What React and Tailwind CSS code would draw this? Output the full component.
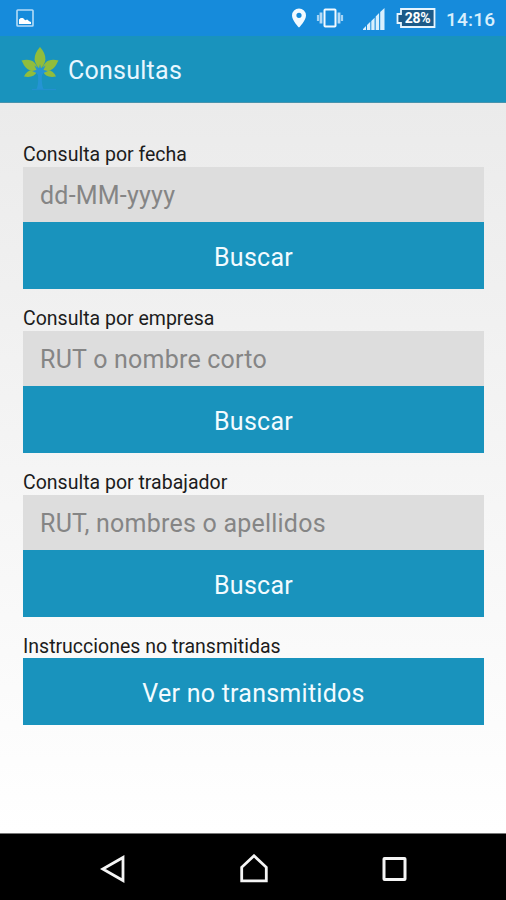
const SECTIONS = [
  { label: 'Consulta por fecha', placeholder: 'dd-MM-yyyy' },
  { label: 'Consulta por empresa', placeholder: 'RUT o nombre corto' },
  { label: 'Consulta por trabajador', placeholder: 'RUT, nombres o apellidos' },
]

function StatusBar() {
  return (
    <div className="h-9 shrink-0 bg-[#168bdb] flex items-center text-[#d9effd]">
      <svg className="ml-4 shrink-0" width="18" height="18" viewBox="0 0 18 18">
        <rect x="1" y="1" width="16" height="16" rx="0.8" fill="none" stroke="#b5dcf7" strokeWidth="1.6" />
        <path d="M3 15v-4.500l1.700-1.600L7 9l2.200 2.300 2-.9 2 1.800 1.800.8v2z" fill="#fff" />
      </svg>

      <svg className="ml-[257px] shrink-0" width="16" height="20" viewBox="0 0 16 20">
        <path
          fillRule="evenodd"
          d="M8 .4a7 7 0 0 0-7 7C1 12.300 8 19.500 8 19.500s7-7.200 7-12.100a7 7 0 0 0-7-7zm0 4.300a2.600 2.600 0 1 1 0 5.200 2.600 2.600 0 0 1 0-5.200z"
          fill="#f2faff"
        />
      </svg>

      <svg className="ml-[9px] shrink-0" width="28" height="20" viewBox="0 0 28 20">
        <rect x="8.500" y="1.500" width="11" height="17" rx="0.800" fill="none" stroke="#f2faff" strokeWidth="2" />
        <path d="M5 4.500v11M23 4.500v11" stroke="#b5dbf7" strokeWidth="2.800" />
        <path d="M2 7v6M26 7v6" stroke="#a5d3f4" strokeWidth="2.200" />
      </svg>

      <svg className="ml-[19px] mt-[2px] shrink-0" width="22" height="22" viewBox="0 0 22 22">
        <path d="M0 22v-1l3-3v4zM4 22v-5l3.300-3.300V22zM8.300 22v-9l3.300-3.300V22zM12.700 22V8.500l3.400-3.500v17zM17.200 22V4L21.500 0v22z" fill="#d9effd" />
      </svg>

      <div className="relative ml-[11px] w-10 h-5 shrink-0">
        <svg width="40" height="20" viewBox="0 0 40 20">
          <path d="M5 1h33.500v18H5v-4H1.500V6H5z" fill="#1c5a88" stroke="#e6f5ff" strokeWidth="1.800" />
        </svg>
        <span className="absolute inset-0 pl-[3px] flex items-center justify-center text-[14px] leading-none font-bold tracking-[-0.3px] text-white">
          28%
        </span>
      </div>

      <span className="ml-[10px] mt-[2px] text-[19px] leading-none font-medium tracking-[0.2px] whitespace-nowrap">14:16</span>
    </div>
  )
}

function TreeLogo() {
  return (
    <svg className="ml-[21px] mb-1 shrink-0" width="38" height="48" viewBox="0 0 38 48">
      <g fill="#91bd3c">
        <path d="M19 4c3.500 4 5.600 8 5.400 12.500-.2 3-2 6-4.400 9h-2c-2.400-3-4.200-6-4.400-9C13.400 12 15.500 8 19 4z" />
        <path d="M.5 17.500c5-1.300 10-1 13 2.200 2.400 2.500 3.300 5.500 3.500 8-5 .5-9.500-.3-12-3C2.800 22.500 2 20 .5 17.500z" />
        <path d="M37.500 17.500c-5-1.300-10-1-13 2.200-2.400 2.500-3.300 5.500-3.500 8 5 .5 9.500-.3 12-3 2.200-2.200 3-4.700 4.500-7.200z" />
        <path d="M3 33.500c1.500-4 4.500-6.300 8.500-6.600 1.800 0 3.300.6 4.500 1.600-1.700 4.300-6 6.300-13 5z" />
        <path d="M35 33.500c-1.500-4-4.500-6.300-8.500-6.600-1.800 0-3.300.6-4.500 1.600 1.700 4.300 6 6.300 13 5z" />
      </g>
      <path
        d="M19 21l1 4.500 4.500-3-2 4.500 4.500 1-4.500 2c-1.500 1.500-1.700 3-1.700 5 0 4.500.3 8 1.700 11h-7c1.400-3 1.700-6.500 1.700-11 0-2-.2-3.500-1.700-5L11 28l4.500-1-2-4.500 4.500 3z"
        fill="#2494d4"
      />
      <path d="M11 46.500h24" stroke="#2390d0" strokeWidth="1.200" />
    </svg>
  )
}

function ActionButton({ children }) {
  return (
    <button className="block w-full h-[67px] bg-[#1993bd] pt-[3px] text-center text-[25px] leading-none tracking-[0.25px] text-[#f2fbff]">
      {children}
    </button>
  )
}

function SearchSection({ label, placeholder }) {
  return (
    <section className="mb-[18px]">
      <label className="block">
        <span className="block h-6 text-[19.5px] leading-[23px] text-[#1c1c1c]">{label}</span>
        <input
          type="text"
          placeholder={placeholder}
          className="block w-full h-[55px] bg-[#dddddd] pl-[17px] pt-[2px] text-[25px] tracking-[0.22px] text-[#333] placeholder:text-[#858585] outline-none"
        />
      </label>
      <ActionButton>Buscar</ActionButton>
    </section>
  )
}

function NavBar() {
  return (
    <nav className="h-[67px] shrink-0 bg-black border-t border-[#777] flex items-center justify-between pl-[100px] pr-[98px] pt-1">
      <svg width="26" height="30" viewBox="0 0 26 30" fill="none" stroke="#f5f5f5" strokeWidth="2.800">
        <path d="M23 3.500v23L2.800 15z" />
      </svg>
      <svg width="30" height="30" viewBox="0 0 30 30" fill="none" stroke="#f5f5f5" strokeWidth="2.800">
        <path d="M15 1.800l12.300 11.500v13.500H2.700V13.300z" />
      </svg>
      <svg width="26" height="26" viewBox="0 0 26 26" fill="none" stroke="#f5f5f5" strokeWidth="3">
        <rect x="2" y="2.500" width="21" height="21" rx="0.500" />
      </svg>
    </nav>
  )
}

export default function App() {
  return (
    <div className="w-[506px] h-[900px] flex flex-col overflow-hidden font-['Roboto',sans-serif]">
      <StatusBar />

      <header className="h-[67px] shrink-0 bg-[#1993bd] border-b border-[#4793ad] flex items-center">
        <TreeLogo />
        <h1 className="ml-[9px] mt-[2px] text-[25px] leading-none tracking-[0.25px] text-[#e8f7ff]">Consultas</h1>
      </header>

      <main className="flex-1 bg-linear-to-b from-[#ebebeb] to-white pl-[23px] pr-[22px] pt-10">
        {SECTIONS.map((s) => (
          <SearchSection key={s.label} label={s.label} placeholder={s.placeholder} />
        ))}
        <section>
          <p className="h-[23px] text-[19.5px] leading-[23px] text-[#1c1c1c]">Instrucciones no transmitidas</p>
          <ActionButton>Ver no transmitidos</ActionButton>
        </section>
      </main>

      <NavBar />
    </div>
  )
}
